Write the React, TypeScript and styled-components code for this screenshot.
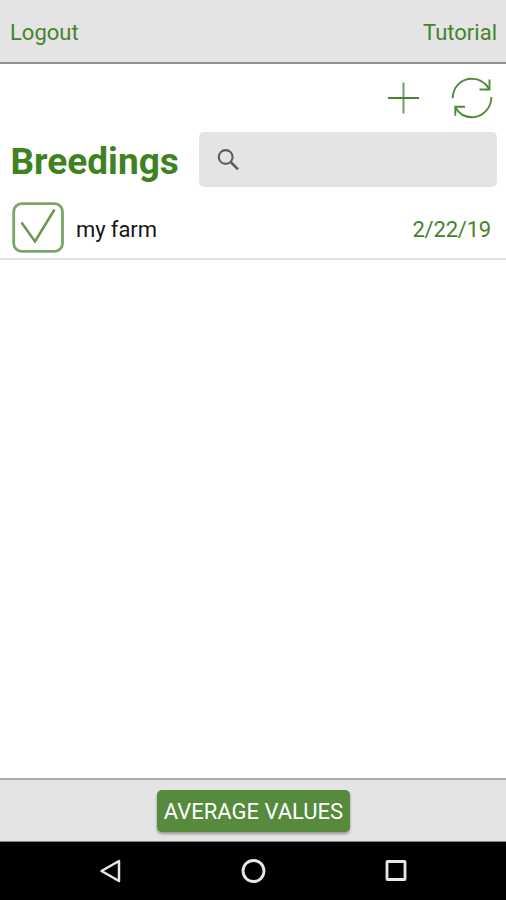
import styled, { createGlobalStyle } from "styled-components";

const GlobalStyle = createGlobalStyle`
    body {
        margin: 0;
        background: white;
        font-family: Roboto, sans-serif;
    }
    * {
        box-sizing: border-box;
    }
    svg {
        display: block;
        flex: none;
    }
`

const Screen = styled.div`
    display: flex;
    flex-direction: column;
    width: 100%;
    height: 100vh;
    overflow: hidden;
`

const Header = styled.header`
    display: flex;
    align-items: center;
    justify-content: space-between;
    height: 64px;
    padding: 3px 9px 0 10px;
    background: #e4e4e4;
    border-bottom: 2px solid #929292;
`

const LinkButton = styled.button`
    padding: 0;
    border: none;
    background: none;
    color: #47822c;
    font: 22px Roboto, sans-serif;
`

const Actions = styled.div`
    display: flex;
    align-items: center;
    justify-content: flex-end;
    gap: 28px;
    height: 68px;
    padding-right: 10px;
`

const IconButton = styled.button`
    padding: 0;
    border: none;
    background: none;
`

const TitleBar = styled.div`
    display: flex;
    align-items: center;
    height: 55px;
    padding: 0 9px 0 10.5px;
`

const Title = styled.h1`
    flex: none;
    width: 188.5px;
    margin: 4px 0 0;
    color: #3e8222;
    font-size: 37px;
    font-weight: 700;
    line-height: 44px;
`

const SearchField = styled.label`
    display: flex;
    flex: 1;
    align-items: center;
    gap: 12px;
    min-width: 0;
    height: 55px;
    padding: 0 17px;
    border-radius: 5px;
    background: #e4e4e4;
`

const SearchInput = styled.input`
    flex: 1;
    min-width: 0;
    padding: 0;
    border: none;
    outline: none;
    background: none;
    font: 22px Roboto, sans-serif;
`

const Row = styled.div`
    display: flex;
    align-items: center;
    height: 73px;
    padding: 10px 15px 0 12px;
    border-bottom: 2px solid #e2e2e2;
`

const RowName = styled.span`
    flex: 1;
    margin: 3px 0 0 12px;
    color: #151515;
    font-size: 22px;
    letter-spacing: -0.1px;
`

const RowDate = styled.span`
    margin-top: 3px;
    color: #47822c;
    font-size: 22px;
    letter-spacing: -0.2px;
`

const Content = styled.main`
    flex: 1;
`

const Footer = styled.footer`
    display: flex;
    align-items: flex-start;
    justify-content: center;
    height: 64px;
    padding: 10px 0 0 1px;
    background: #e4e4e4;
    border-top: 2px solid #a9a9a9;
    border-bottom: 1px solid #868686;
`

const AverageButton = styled.button`
    width: 193px;
    height: 42px;
    padding: 1px 0 0;
    border: none;
    border-radius: 5px;
    background: #568a3d;
    box-shadow: 0 2px 3px rgba(0, 0, 0, 0.35);
    color: white;
    font: 22px Roboto, sans-serif;
    white-space: nowrap;
`

const NavBar = styled.nav`
    display: flex;
    align-items: center;
    justify-content: center;
    gap: 118px;
    height: 58px;
    background: black;
`

const PlusIcon = () => (
    <svg width="33" height="33" viewBox="0 0 33 33" fill="none">
        <path d="M16.5 .5v31" stroke="#6f9f58" strokeWidth="2" />
        <path d="M1 16h31" stroke="#44872a" strokeWidth="2" />
    </svg>
)

const RefreshIcon = () => (
    <svg width="48" height="44" viewBox="0 0 48 44" fill="none" stroke="#4f8c35" strokeWidth="1.9">
        <path d="M4.7 22.3C5 10.5 13.5 2.8 23.8 2.8C31.5 2.8 37.5 6.5 41.3 13.2" />
        <path d="M41.5 3.5v10H31.5" />
        <path d="M43.4 21C43.2 32.5 34.5 41.2 24.3 41.2C16.5 41.2 10.5 37.5 7.2 31" />
        <path d="M7.3 39.8V30.7H17" />
    </svg>
)

const SearchIcon = () => (
    <svg width="26" height="26" viewBox="0 0 26 26" fill="none" stroke="#5c5c5c">
        <circle cx="9.7" cy="10" r="6.9" strokeWidth="2.1" />
        <path d="M14.7 15l7.3 7.3" strokeWidth="2.6" />
    </svg>
)

const CheckIcon = () => (
    <svg width="52" height="51" viewBox="0 0 52 51" fill="none" stroke="#7aa568">
        <rect x="1.7" y="1.7" width="48.8" height="47.7" rx="8" strokeWidth="2.8" />
        <path d="M9.5 20.5L23 39.5L42.5 7.5" stroke="#68994f" strokeWidth="2.5" />
    </svg>
)

const BackIcon = () => (
    <svg width="24" height="26" viewBox="0 0 24 26" fill="none">
        <path d="M21 3v20L3.5 13z" stroke="#e8e8e8" strokeWidth="2.5" strokeLinejoin="round" />
    </svg>
)

const HomeIcon = () => (
    <svg width="26" height="26" viewBox="0 0 26 26" fill="none">
        <circle cx="13.5" cy="13" r="10.5" stroke="#e8e8e8" strokeWidth="2.8" />
    </svg>
)

const RecentIcon = () => (
    <svg width="24" height="26" viewBox="0 0 24 26" fill="none">
        <rect x="3" y="3.5" width="18" height="18" rx="0.5" stroke="#e8e8e8" strokeWidth="2.8" />
    </svg>
)

const breedings = [{ id: 1, name: "my farm", date: "2/22/19" }];

export default function App() {
    return (
        <Screen>
            <GlobalStyle />
            <Header>
                <LinkButton>Logout</LinkButton>
                <LinkButton>Tutorial</LinkButton>
            </Header>
            <Actions>
                <IconButton aria-label="Add"><PlusIcon /></IconButton>
                <IconButton aria-label="Refresh"><RefreshIcon /></IconButton>
            </Actions>
            <TitleBar>
                <Title>Breedings</Title>
                <SearchField>
                    <SearchIcon />
                    <SearchInput aria-label="Search" />
                </SearchField>
            </TitleBar>
            <Content>
                {breedings.map((item) => (
                    <Row key={item.id}>
                        <CheckIcon />
                        <RowName>{item.name}</RowName>
                        <RowDate>{item.date}</RowDate>
                    </Row>
                ))}
            </Content>
            <Footer>
                <AverageButton>AVERAGE VALUES</AverageButton>
            </Footer>
            <NavBar>
                <IconButton aria-label="Back"><BackIcon /></IconButton>
                <IconButton aria-label="Home"><HomeIcon /></IconButton>
                <IconButton aria-label="Recent apps"><RecentIcon /></IconButton>
            </NavBar>
        </Screen>
    )
}
